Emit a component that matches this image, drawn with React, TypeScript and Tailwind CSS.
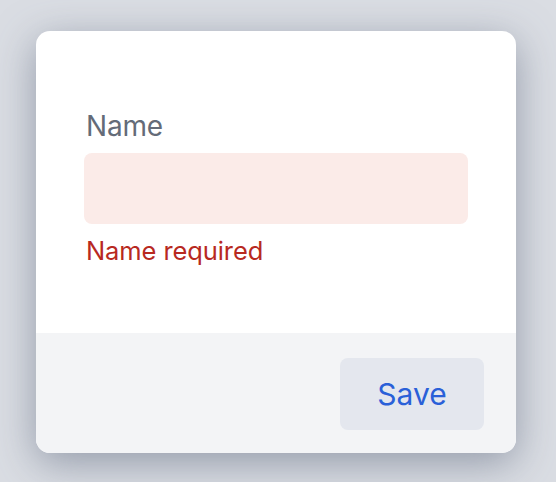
import React from 'react';

export default function App() {
  return (
    <div
      className="min-h-screen w-full bg-[#dadde3] pt-[31px] pl-[36px]"
      style={{ fontFamily: 'Inter, "Noto Sans", sans-serif' }}
    >
      <div className="w-[480px] overflow-hidden rounded-[14px] bg-white shadow-[0_10px_40px_rgba(90,100,122,0.55)]">
        <div className="px-[48px] pt-[77px] pb-[64px]">
          <label className="block pl-[2px] text-[28px] leading-[36px] tracking-[-0.2px] text-[#646b78]">Name</label>
          <div className="mt-[9px] h-[71px] w-full rounded-[8px] bg-[#fbebe8]" />
          <p className="mt-[9px] pl-[2px] text-[25.5px] leading-[36px] tracking-[-0.1px] text-[#b8291f]">Name required</p>
        </div>
        <div className="flex justify-end bg-[#f3f4f6] px-[32px] pt-[25px] pb-[23px]">
          <button className="flex h-[72px] w-[144px] items-center justify-center rounded-[8px] bg-[#e4e7ee] text-[30px] text-[#2a60d8]">
            Save
          </button>
        </div>
      </div>
    </div>
  );
}
